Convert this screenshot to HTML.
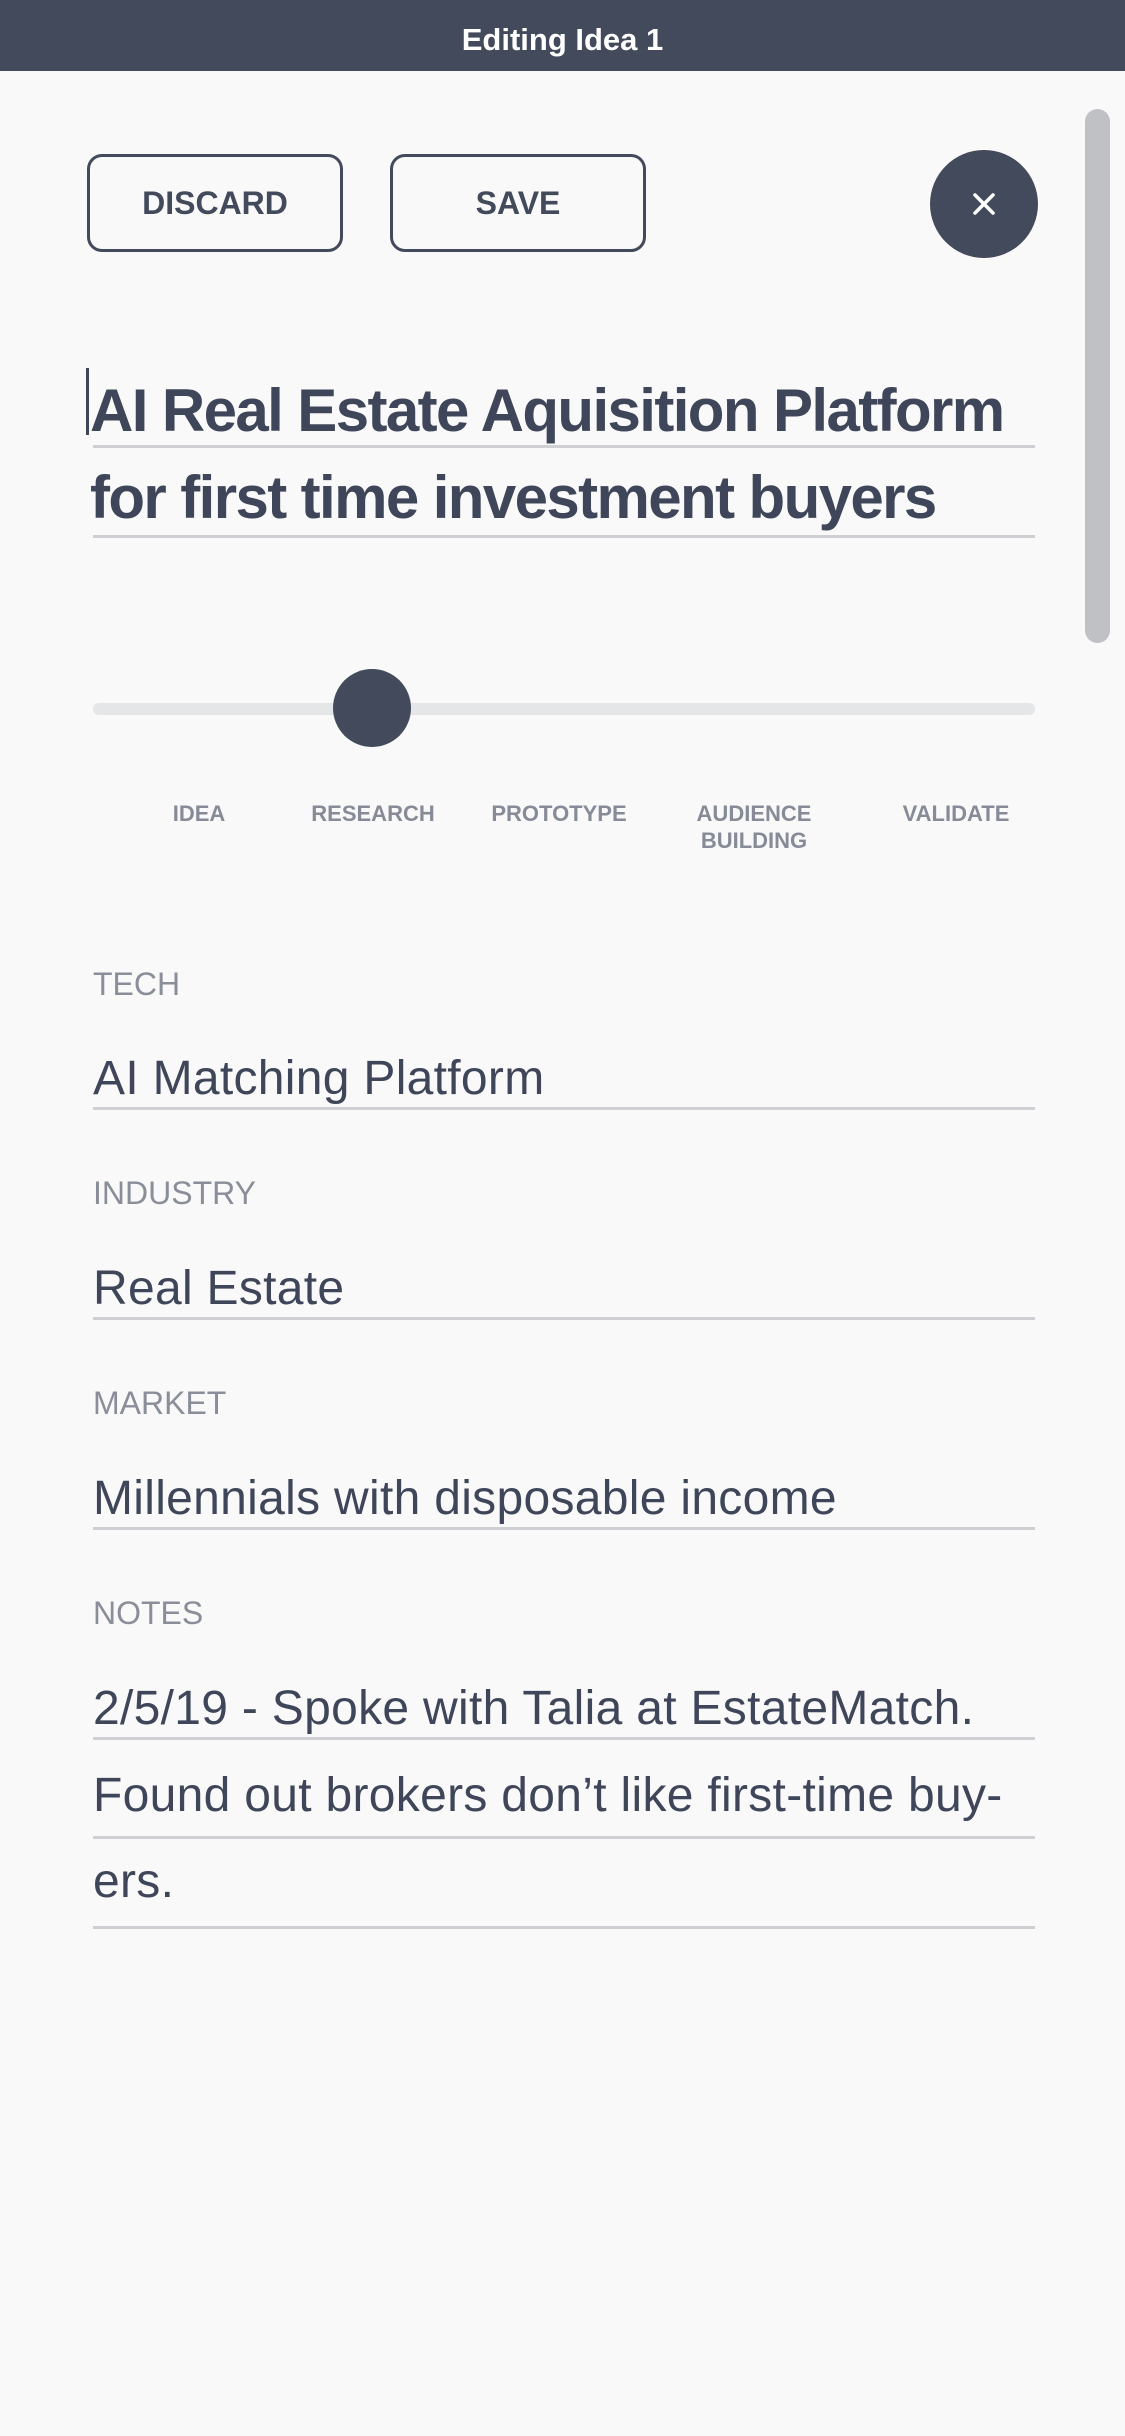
<!DOCTYPE html>
<html><head><meta charset="utf-8">
<style>
html,body{margin:0;padding:0;}
body{width:1125px;height:2436px;background:#f9f9f9;position:relative;overflow:hidden;font-family:"Liberation Sans",sans-serif;color:#3f4659;}
.t{position:absolute;line-height:1;white-space:nowrap;}
.hdr{position:absolute;left:0;top:0;width:1125px;height:71px;background:#424a5b;}
.btn{position:absolute;top:154px;width:250px;height:92px;border:3px solid #424a5b;border-radius:15px;display:flex;align-items:center;justify-content:center;font-weight:bold;font-size:32px;color:#424a5b;}
.ul{position:absolute;left:93px;width:942px;height:3px;background:#cfd0d3;}
.lab{font-size:32px;color:#8a8e99;left:93px;}
.val{font-size:48px;color:#3f4659;left:93px;letter-spacing:0.3px;}
.st{font-size:22px;font-weight:bold;color:#868b97;text-align:center;transform:translateX(-50%);}
.ttl{font-size:60px;font-weight:bold;left:90px;letter-spacing:-1.6px;color:#3f4659;}
</style></head><body>
<div class="hdr"></div>
<div class="t" style="top:24px;left:0;width:1125px;text-align:center;font-size:31px;font-weight:bold;color:#fff;">Editing Idea 1</div>
<div style="position:absolute;left:1085px;top:109px;width:25px;height:534px;border-radius:13px;background:#bfc1c5;"></div>
<div class="btn" style="left:87px;">DISCARD</div>
<div class="btn" style="left:390px;">SAVE</div>
<div style="position:absolute;left:930px;top:150px;width:108px;height:108px;border-radius:50%;background:#424a5b;"></div>
<svg style="position:absolute;left:930px;top:150px" width="108" height="108"><path d="M45 45 L63 63 M63 45 L45 63" stroke="#fff" stroke-width="3.5" stroke-linecap="round"/></svg>
<div style="position:absolute;left:86px;top:368px;width:3px;height:67px;background:#3f4659;"></div>
<div class="t ttl" style="top:381px;">AI Real Estate Aquisition Platform</div>
<div class="ul" style="top:445px;"></div>
<div class="t ttl" style="top:468px;">for first time investment buyers</div>
<div class="ul" style="top:535px;"></div>
<div style="position:absolute;left:93px;top:703px;width:942px;height:12px;border-radius:6px;background:#e5e6e8;"></div>
<div style="position:absolute;left:333px;top:669px;width:78px;height:78px;border-radius:50%;background:#424a5b;"></div>
<div class="t st" style="left:199px;top:803px;">IDEA</div>
<div class="t st" style="left:373px;top:803px;">RESEARCH</div>
<div class="t st" style="left:559px;top:803px;">PROTOTYPE</div>
<div class="t st" style="left:754px;top:803px;">AUDIENCE</div>
<div class="t st" style="left:754px;top:830px;">BUILDING</div>
<div class="t st" style="left:956px;top:803px;">VALIDATE</div>
<div class="t lab" style="top:968px;">TECH</div>
<div class="t val" style="top:1055px;">AI Matching Platform</div>
<div class="ul" style="top:1107px;"></div>
<div class="t lab" style="top:1177px;">INDUSTRY</div>
<div class="t val" style="top:1265px;">Real Estate</div>
<div class="ul" style="top:1317px;"></div>
<div class="t lab" style="top:1387px;">MARKET</div>
<div class="t val" style="top:1475px;">Millennials with disposable income</div>
<div class="ul" style="top:1527px;"></div>
<div class="t lab" style="top:1597px;">NOTES</div>
<div class="t val" style="top:1685px;">2/5/19 - Spoke with Talia at EstateMatch.</div>
<div class="ul" style="top:1737px;"></div>
<div class="t val" style="top:1772px;">Found out brokers don’t like first-time buy-</div>
<div class="ul" style="top:1836px;"></div>
<div class="t val" style="top:1858px;">ers.</div>
<div class="ul" style="top:1926px;"></div>
</body></html>
